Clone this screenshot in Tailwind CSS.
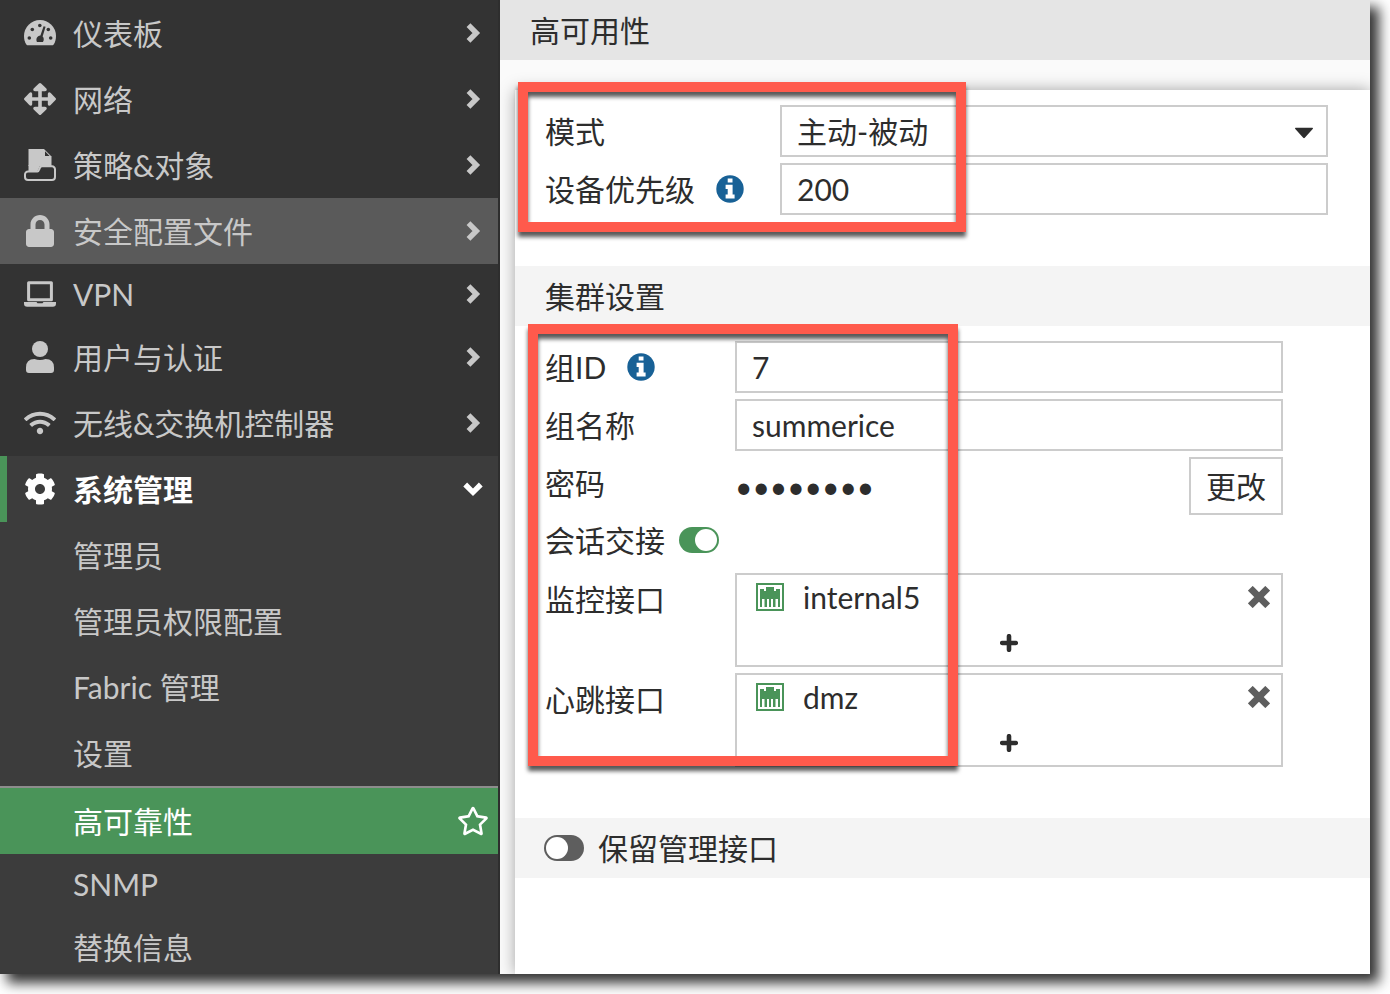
<!DOCTYPE html>
<html lang="zh-CN">
<head>
  <meta charset="UTF-8">
  <meta name="viewport" content="width=device-width, initial-scale=1.0">
  <title>高可用性</title>
  <script src="https://cdn.jsdelivr.net/npm/@tailwindcss/browser@4"></script>
</head>
<body class="bg-white h-screen pr-5 pb-5 overflow-hidden font-[Lato,'Noto_Sans_CJK_SC',sans-serif] text-[30px] leading-[44px] text-[#2d2d2d]">
  <!-- shared symbols -->
  <svg class="hidden">
    <symbol id="chevron-right" viewBox="0 0 24 24"><path d="M7.500 4.200L15.300 12l-7.800 7.800" fill="none" stroke="currentColor" stroke-width="5.400"/></symbol>
    <symbol id="info" viewBox="0 0 28 28">
      <circle cx="14" cy="14" r="13.7" fill="#186196"/>
      <path d="M11.7 3.5h4.8v4h-4.8zM9.6 9.8h7v9.6h2v4.1H9.600v-4.100h2.100v-5.500H9.600z" fill="#fff"/>
    </symbol>
    <symbol id="port" viewBox="0 0 28 28">
      <path d="M1 1h26v26H1z" fill="none" stroke="#4a9459" stroke-width="2"/>
      <path d="M4 6h4v2h2V4h8v4h2V6h4v18h-2v-8h-2v8h-3v-8h-2v8h-2v-8h-2v8H8v-8H6v8H4z" fill="#4a9459"/>
      <path d="M8 16h1v8H8zM19 16h1v8h-1z" fill="#a5caac"/>
    </symbol>
    <symbol id="times" viewBox="0 0 22 22"><path d="M4.700 4.700l12.600 12.600M17.300 4.700L4.700 17.300" stroke="#5e5e5e" stroke-width="6.800" stroke-linecap="square"/></symbol>
    <symbol id="plus" viewBox="0 0 18 18"><path d="M9 2.200v13.600M2.200 9h13.600" stroke="#2d2d2d" stroke-width="4.600" stroke-linecap="round"/></symbol>
  </svg>

  <div class="flex h-full shadow-[8px_8px_12px_1px_rgba(0,0,0,0.8)]">
    <!-- sidebar -->
    <nav class="w-[500px] shrink-0 h-full overflow-hidden bg-[#333] border-r-2 border-[#2e2e2e] text-[#c8c8c8]">
      <a href="#" class="flex items-center h-[66px] pl-6 pr-[13px]">
        <svg class="size-8 mr-[17px]" viewBox="0 0 32 32"><path d="M0 19a16 16 0 0 1 32 0c0 3-.7 5.600-2 8-.5.8-1 1.300-2 1.300H4c-1 0-1.500-.5-2-1.300-1.300-2.400-2-5-2-8z" fill="currentColor"/><g fill="#333"><circle cx="15.800" cy="8.500" r="1.800"/><circle cx="8.300" cy="12.500" r="1.800"/><circle cx="24.300" cy="12.500" r="1.800"/><circle cx="5.300" cy="21" r="1.800"/><circle cx="26.700" cy="21" r="1.800"/><path d="M19.600 9.200l2 .6-3 9.600c1.400 1.200 1.600 3.600.4 5.600h-6c-1.500-3 0-6.200 3.400-6.600z"/></g></svg>
        <span class="flex-1">仪表板</span><svg class="size-6"><use href="#chevron-right"/></svg>
      </a>
      <a href="#" class="flex items-center h-[66px] pl-6 pr-[13px]">
        <svg class="size-8 mr-[17px]" viewBox="0 0 32 32" fill="currentColor"><path d="M16 5v22M5 16h22" stroke="currentColor" stroke-width="3.600"/><path id="arrow" d="M14.900.5q1.100-1 2.200 0l5 4.800q1.100 1.200.4 2.200-.5.700-1.600.7h-9.800q-1.100 0-1.600-.7-.7-1 .4-2.200z"/><use href="#arrow" transform="rotate(90 16 16)"/><use href="#arrow" transform="rotate(180 16 16)"/><use href="#arrow" transform="rotate(270 16 16)"/></svg>
        <span class="flex-1">网络</span><svg class="size-6"><use href="#chevron-right"/></svg>
      </a>
      <a href="#" class="flex items-center h-[66px] pl-6 pr-[13px]">
        <svg class="size-8 mr-[17px]" viewBox="0 0 32 32"><path d="M4.500 0h15.500l7.500 7.500V17H4.500z" fill="currentColor"/><path d="M4.500 16h12l-3 6h-9z" fill="currentColor"/><path d="M21 2.200V7h4.600z" fill="#333"/><path d="M4 22.500h9.500c2 0 1.500-5.200 4.500-5.200h10a3 3 0 0 1 3 3V28a3 3 0 0 1-3 3H4a3 3 0 0 1-3-3v-2.500a3 3 0 0 1 3-3z" fill="#333" stroke="currentColor" stroke-width="2"/></svg>
        <span class="flex-1">策略&amp;对象</span><svg class="size-6"><use href="#chevron-right"/></svg>
      </a>
      <a href="#" class="flex items-center h-[66px] pl-6 pr-[13px] bg-[#5a5a5a]">
        <svg class="size-8 mr-[17px]" viewBox="0 0 448 512" fill="currentColor"><path d="M400 224h-24v-72C376 68.200 307.800 0 224 0S72 68.200 72 152v72H48c-26.500 0-48 21.500-48 48v192c0 26.500 21.500 48 48 48h352c26.500 0 48-21.500 48-48V272c0-26.500-21.500-48-48-48zm-104 0H152v-72c0-39.700 32.300-72 72-72s72 32.300 72 72v72z"/></svg>
        <span class="flex-1">安全配置文件</span><svg class="size-6"><use href="#chevron-right"/></svg>
      </a>
      <a href="#" class="flex items-center h-[60px] pl-6 pr-[13px]">
        <svg class="size-8 mr-[17px]" viewBox="0 0 32 32" fill="currentColor"><path d="M4.600 4.800h22.800v17H4.600z" fill="none" stroke="currentColor" stroke-width="3" stroke-linejoin="round"/><path d="M0 24h12.500l1 1.300h5l1-1.300H32v1.500q0 3.200-3.200 3.200H3.200Q0 28.700 0 25.500z"/></svg>
        <span class="flex-1">VPN</span><svg class="size-6"><use href="#chevron-right"/></svg>
      </a>
      <a href="#" class="flex items-center h-[66px] pl-6 pr-[13px]">
        <svg class="size-8 mr-[17px]" viewBox="0 0 32 32" fill="currentColor"><circle cx="16" cy="8" r="8"/><path d="M2 26.500Q2 18 10.500 18q5.500 1.800 11 0Q30 18 30 26.500V29q0 3-3 3H5q-3 0-3-3z"/></svg>
        <span class="flex-1">用户与认证</span><svg class="size-6"><use href="#chevron-right"/></svg>
      </a>
      <a href="#" class="flex items-center h-[66px] pl-6 pr-[13px]">
        <svg class="size-8 mr-[17px]" viewBox="0 0 640 512" fill="currentColor"><path d="M634.910 154.880C457.740-8.990 182.190-8.930 5.090 154.880c-6.660 6.160-6.790 16.590-.35 22.980l34.240 33.970c6.140 6.100 16.020 6.230 22.400.38 145.920-133.680 371.300-133.710 517.250 0 6.380 5.850 16.260 5.710 22.400-.38l34.240-33.970c6.430-6.390 6.300-16.820-.36-22.980zM320 352c-35.350 0-64 28.650-64 64s28.650 64 64 64 64-28.650 64-64-28.650-64-64-64zm202.670-83.590c-115.260-101.930-290.210-101.820-405.340 0-6.900 6.100-7.120 16.690-.57 23.150l34.440 33.990c6 5.920 15.660 6.320 22.050.8 83.950-72.570 209.740-72.410 293.490 0 6.390 5.520 16.050 5.130 22.050-.8l34.440-33.990c6.560-6.460 6.330-17.060-.56-23.150z"/></svg>
        <span class="flex-1">无线&amp;交换机控制器</span><svg class="size-6"><use href="#chevron-right"/></svg>
      </a>

      <div class="bg-[#3c3c3c]">
        <a href="#" class="flex items-center h-[66px] border-l-[7px] border-[#4a9459] pl-[17px] pr-[13px] text-white font-bold">
          <svg class="size-8 mr-[17px]" viewBox="0 0 512 512" fill="currentColor"><path d="M487.400 315.700l-42.600-24.600c4.300-23.200 4.300-47 0-70.200l42.600-24.600c4.900-2.800 7.100-8.600 5.500-14-11.100-35.600-30-67.800-54.700-94.600-3.800-4.100-10-5.100-14.800-2.300L380.800 110c-17.900-15.400-38.500-27.300-60.800-35.100V25.800c0-5.600-3.900-10.500-9.400-11.700-36.700-8.200-74.300-7.800-109.200 0-5.500 1.200-9.400 6.100-9.400 11.700V75c-22.200 7.900-42.800 19.800-60.800 35.100L88.700 85.500c-4.900-2.800-11-1.900-14.800 2.300-24.700 26.700-43.600 58.900-54.700 94.600-1.700 5.400.6 11.200 5.500 14L67.300 221c-4.300 23.200-4.300 47 0 70.200l-42.600 24.600c-4.900 2.800-7.100 8.600-5.500 14 11.100 35.600 30 67.800 54.700 94.600 3.800 4.100 10 5.100 14.800 2.300l42.600-24.600c17.900 15.400 38.500 27.300 60.800 35.100v49.200c0 5.600 3.900 10.500 9.400 11.700 36.700 8.200 74.300 7.800 109.200 0 5.500-1.200 9.400-6.100 9.400-11.700v-49.200c22.200-7.900 42.800-19.800 60.800-35.100l42.600 24.600c4.900 2.800 11 1.900 14.800-2.300 24.700-26.700 43.600-58.900 54.700-94.600 1.500-5.500-.7-11.300-5.600-14.100zM256 336c-44.100 0-80-35.900-80-80s35.900-80 80-80 80 35.900 80 80-35.900 80-80 80z"/></svg>
          <span class="flex-1">系统管理</span><svg class="size-6 rotate-90"><use href="#chevron-right"/></svg>
        </a>
        <a href="#" class="flex items-center h-[66px] pl-[73px]">管理员</a>
        <a href="#" class="flex items-center h-[66px] pl-[73px]">管理员权限配置</a>
        <a href="#" class="flex items-center h-[66px] pl-[73px]">Fabric 管理</a>
        <a href="#" class="flex items-center h-[66px] pl-[73px]">设置</a>
        <a href="#" class="flex items-center h-[68px] border-t-2 border-[#8d8d8d] bg-[#4a9459] pl-[73px] pr-[9px] text-white">
          <span class="flex-1">高可靠性</span>
          <svg class="size-8" viewBox="0 0 576 512" fill="currentColor"><path d="M528.100 171.500L382 150.200 316.700 17.800c-11.700-23.600-45.600-23.900-57.400 0L194 150.200 47.900 171.500c-26.200 3.800-36.700 36.100-17.700 54.600l105.700 103-25 145.500c-4.500 26.300 23.200 46 46.400 33.700L288 439.600l130.700 68.700c23.200 12.200 50.900-7.400 46.400-33.700l-25-145.500 105.700-103c19-18.500 8.500-50.800-17.700-54.600zM388.600 312.300l23.700 138.400L288 385.400l-124.300 65.300 23.700-138.400-100.600-98 139-20.200 62.200-126 62.200 126 139 20.200-100.600 98z"/></svg>
        </a>
        <a href="#" class="flex items-center h-[60px] pl-[73px]">SNMP</a>
        <a href="#" class="flex items-center h-[66px] pl-[73px]">替换信息</a>
      </div>
    </nav>

    <main class="flex-1 min-w-0 flex flex-col bg-[#fafafa] overflow-hidden">
      <h1 class="h-[60px] shrink-0 flex items-center pl-[30px] bg-[#e5e5e5]">高可用性</h1>

      <form class="flex-1 mt-[30px] ml-[15px] bg-white shadow-[0_0_15px_rgba(0,0,0,0.35)]">
        <section class="relative flex flex-col gap-[6px] pt-[15px] pb-[51px] pl-[30px] pr-[42px]">
          <div class="flex items-center h-[52px]">
            <label for="mode" class="w-[235px]">模式</label>
            <div class="relative flex-1">
              <select id="mode" class="appearance-none block w-full h-[52px] border-2 border-[#ccc] bg-white px-[15px]">
                <option>主动-被动</option>
              </select>
              <svg class="absolute right-3.5 top-[22px] w-5 h-3 pointer-events-none" viewBox="0 0 20 12"><path d="M1.500.8h17q1 .4.200 1.200l-7.900 8.800q-.8.700-1.600 0L1.300 2Q.5 1.200 1.500.8z" fill="#2d2d2d"/></svg>
            </div>
          </div>
          <div class="flex items-center h-[52px]">
            <label for="priority" class="w-[235px] flex items-center gap-[21px]">设备优先级 <svg class="size-7"><use href="#info"/></svg></label>
            <input id="priority" type="text" value="200" class="flex-1 min-w-0 h-[52px] border-2 border-[#ccc] bg-white px-[15px]">
          </div>
          <div class="absolute left-[3px] -top-2 w-[448px] h-[150px] border-10 border-[#ff5a4c] pointer-events-none drop-shadow-[0_5px_2px_rgba(0,0,0,0.65)]"></div>
        </section>

        <h2 class="h-[60px] flex items-center pl-[30px] bg-[#f4f4f4]">集群设置</h2>
        <section class="relative flex flex-col gap-[6px] pt-[15px] pb-[51px] pl-[30px] pr-[87px]">
          <div class="flex items-center h-[52px]">
            <label for="group-id" class="w-[190px] flex items-center gap-[21px]">组ID <svg class="size-7"><use href="#info"/></svg></label>
            <input id="group-id" type="text" value="7" class="flex-1 min-w-0 h-[52px] border-2 border-[#ccc] bg-white px-[15px]">
          </div>
          <div class="flex items-center h-[52px]">
            <label for="group-name" class="w-[190px]">组名称</label>
            <input id="group-name" type="text" value="summerice" class="flex-1 min-w-0 h-[52px] border-2 border-[#ccc] bg-white px-[15px]">
          </div>
          <div class="flex h-[58px]">
            <span class="w-[190px] h-[52px] flex items-center">密码</span>
            <span class="flex-1 flex items-center">••••••••</span>
            <button type="button" class="w-[94px] border-2 border-[#ccc] bg-white">更改</button>
          </div>
          <div class="flex items-center gap-[14px] h-[38px]">
            <label for="session">会话交接</label>
            <input id="session" type="checkbox" checked class="appearance-none w-10 h-[26px] rounded-full bg-[#4a9459] p-0.5 pl-4 before:block before:size-[22px] before:rounded-full before:bg-white">
          </div>
          <div class="flex mt-2">
            <span class="w-[190px] h-[52px] flex items-center">监控接口</span>
            <div class="flex-1 h-[94px] border-2 border-[#ccc] bg-white">
              <div class="flex items-center h-11 pl-[19px] pr-[11px]">
                <svg class="size-7 mr-[19px]"><use href="#port"/></svg>
                <span class="flex-1">internal5</span>
                <button type="button" aria-label="删除"><svg class="size-[22px]"><use href="#times"/></svg></button>
              </div>
              <button type="button" aria-label="添加" class="flex items-center justify-center w-full h-12"><svg class="size-[18px]"><use href="#plus"/></svg></button>
            </div>
          </div>
          <div class="flex">
            <span class="w-[190px] h-[52px] flex items-center">心跳接口</span>
            <div class="flex-1 h-[94px] border-2 border-[#ccc] bg-white">
              <div class="flex items-center h-11 pl-[19px] pr-[11px]">
                <svg class="size-7 mr-[19px]"><use href="#port"/></svg>
                <span class="flex-1">dmz</span>
                <button type="button" aria-label="删除"><svg class="size-[22px]"><use href="#times"/></svg></button>
              </div>
              <button type="button" aria-label="添加" class="flex items-center justify-center w-full h-12"><svg class="size-[18px]"><use href="#plus"/></svg></button>
            </div>
          </div>
          <div class="absolute left-[13px] -top-[2px] w-[430px] h-[442px] border-10 border-[#ff5a4c] pointer-events-none drop-shadow-[0_5px_2px_rgba(0,0,0,0.65)]"></div>
        </section>

        <div class="h-[60px] flex items-center gap-[14px] pl-[29px] bg-[#f4f4f4]">
          <input id="reserved" type="checkbox" class="appearance-none w-10 h-[26px] rounded-full bg-[#5e5e5e] p-0.5 before:block before:size-[22px] before:rounded-full before:bg-white">
          <label for="reserved">保留管理接口</label>
        </div>
      </form>
    </main>
  </div>
</body>
</html>
